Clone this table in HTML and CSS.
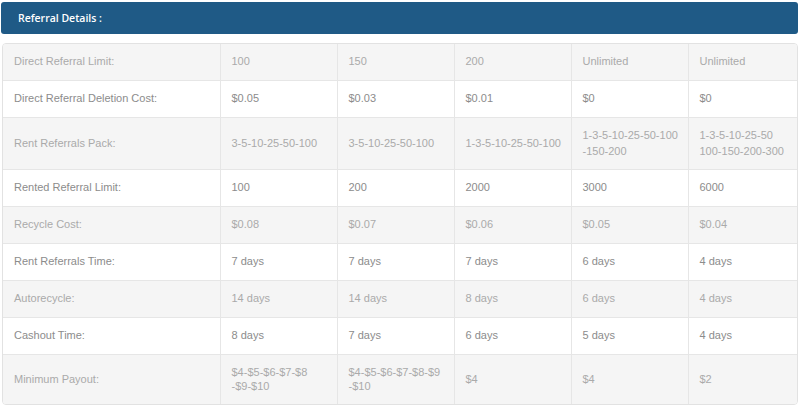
FILE: index.html
```html
<!DOCTYPE html>
<html>
<head>
<meta charset="utf-8">
<link rel="stylesheet" href="styles.css">
</head>
<body>
<div class="panel">
  <div class="panel-head">Referral Details :</div>
  <div class="table-wrap">
    <table class="ref-table">
      <colgroup>
        <col class="c-label"><col class="c-val"><col class="c-val"><col class="c-val"><col class="c-val"><col class="c-last">
      </colgroup>
      <tr class="alt"><td>Direct Referral Limit:</td><td>100</td><td>150</td><td>200</td><td>Unlimited</td><td>Unlimited</td></tr>
      <tr><td>Direct Referral Deletion Cost:</td><td>$0.05</td><td>$0.03</td><td>$0.01</td><td>$0</td><td>$0</td></tr>
      <tr class="alt"><td>Rent Referrals Pack:</td><td>3-5-10-25-50-100</td><td>3-5-10-25-50-100</td><td>1-3-5-10-25-50-100</td><td>1-3-5-10-25-50-100<br>-150-200</td><td>1-3-5-10-25-50<br>100-150-200-300</td></tr>
      <tr><td>Rented Referral Limit:</td><td>100</td><td>200</td><td>2000</td><td>3000</td><td>6000</td></tr>
      <tr class="alt"><td>Recycle Cost:</td><td>$0.08</td><td>$0.07</td><td>$0.06</td><td>$0.05</td><td>$0.04</td></tr>
      <tr><td>Rent Referrals Time:</td><td>7 days</td><td>7 days</td><td>7 days</td><td>6 days</td><td>4 days</td></tr>
      <tr class="alt"><td>Autorecycle:</td><td>14 days</td><td>14 days</td><td>8 days</td><td>6 days</td><td>4 days</td></tr>
      <tr><td>Cashout Time:</td><td>8 days</td><td>7 days</td><td>6 days</td><td>5 days</td><td>4 days</td></tr>
      <tr class="alt last"><td>Minimum Payout:</td><td>$4-$5-$6-$7-$8<br>-$9-$10</td><td>$4-$5-$6-$7-$8-$9<br>-$10</td><td>$4</td><td>$4</td><td>$2</td></tr>
    </table>
  </div>
</div>
</body>
</html>
```
FILE: styles.css
```css
html, body {
  margin: 0;
  padding: 0;
  background: #ffffff;
}
.panel {
  padding: 2px 2px 0 1px;
}
.panel-head {
  height: 32px;
  line-height: 32px;
  background: #1f5a86;
  border-radius: 3px;
  color: #ffffff;
  font-family: "Open Sans", "Liberation Sans", sans-serif;
  font-weight: 600;
  font-size: 10.5px;
  padding-left: 17px;
}
.table-wrap {
  margin: 9px 0 0 1px;
  border: 1px solid #e2e2e2;
  border-radius: 4px;
  overflow: hidden;
}
.ref-table {
  width: 100%;
  border-collapse: collapse;
  table-layout: fixed;
  font-family: "Liberation Sans", Arial, sans-serif;
  font-size: 11px;
}
.c-label { width: 217px; }
.c-val { width: 117px; }
.ref-table td {
  padding: 10px 11px;
  line-height: 15.85px;
  color: #8c8c8c;
  border-right: 1px solid #e6e6e6;
  border-bottom: 1px solid #e6e6e6;
  vertical-align: middle;
  white-space: nowrap;
}
.ref-table td:last-child { border-right: none; }
.ref-table tr:last-child td { border-bottom: none; }
.ref-table tr.alt td {
  background: #f5f5f5;
  color: #aaaaaa;
}
.ref-table tr.last td {
  line-height: 14.5px;
}
```
